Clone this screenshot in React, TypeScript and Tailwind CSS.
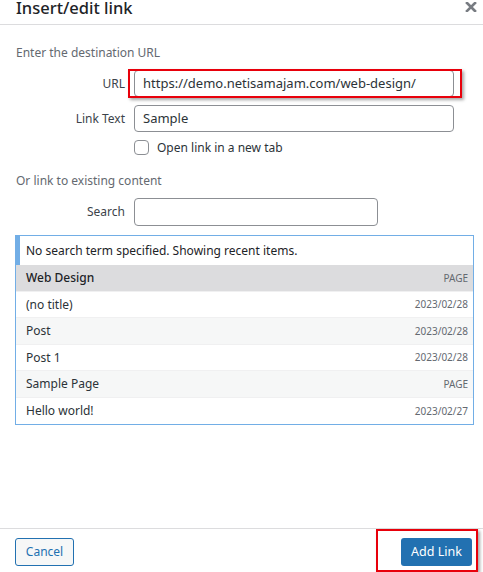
const results = [
  { title: "Web Design", info: "PAGE", selected: true },
  { title: "(no title)", info: "2023/02/28" },
  { title: "Post", info: "2023/02/28" },
  { title: "Post 1", info: "2023/02/28" },
  { title: "Sample Page", info: "PAGE" },
  { title: "Hello world!", info: "2023/02/27" },
];

const font = { fontFamily: '"Noto Sans", "Open Sans", sans-serif' };

export default function App() {
  return (
    <div
      className="h-[572px] w-[483px] flex flex-col bg-white text-[#1d2327] overflow-hidden"
      style={font}
    >
      {/* Header */}
      <div className="h-[25px] shrink-0 flex items-start justify-between border-b border-[#dcdcde] pl-4 pr-[6px]">
        <h1 className="text-[16.5px] leading-[18px] -mt-px font-medium text-[#1d2327]">
          Insert/edit link
        </h1>
        <button className="mt-[2px] text-[#787c82]" aria-label="Close">
          <svg width="12" height="10" viewBox="0 0 12 10">
            <path d="M2 1 L10 9 M10 1 L2 9" stroke="currentColor" strokeWidth="2.6" strokeLinecap="square" />
          </svg>
        </button>
      </div>

      {/* Body */}
      <div className="flex-1 flex flex-col pl-[15px] pr-[9px]">
        <p className="mt-[19px] pl-px h-[18px] text-[12px] leading-[18px] text-[#646970]">
          Enter the destination URL
        </p>

        <div className="mt-[8px] flex items-center gap-[9px]">
          <label className="w-[110px] text-right text-[12px] text-[#3c434a]">URL</label>
          <div className="relative">
            <div className="w-[320px] h-[27px] rounded-[4px] border border-[#8c8f94] px-2 flex items-center text-[13px] text-[#2c3338]">
              https://demo.netisamajam.com/web-design/
            </div>
            <div className="absolute -left-[6px] -right-[8px] -top-px -bottom-px border-2 border-[#e8000b] shadow-[2px_2px_3px_rgba(0,0,0,0.35)] pointer-events-none" />
          </div>
        </div>

        <div className="mt-[8px] flex items-center gap-[9px]">
          <label className="w-[110px] text-right text-[12px] text-[#3c434a]">Link Text</label>
          <div className="w-[320px] h-[27px] rounded-[4px] border border-[#8c8f94] px-2 flex items-center text-[13px] text-[#2c3338]">
            Sample
          </div>
        </div>

        <div className="mt-[8px] h-[15px] flex items-center gap-[8px] pl-[119px]">
          <span className="w-[15px] h-[15px] rounded-[4px] border border-[#8c8f94] bg-white" />
          <span className="text-[12px] leading-[15px] text-[#2c3338]">Open link in a new tab</span>
        </div>

        <p className="mt-[17px] pl-px h-[18px] text-[12px] leading-[18px] text-[#646970]">
          Or link to existing content
        </p>

        <div className="mt-[8px] flex items-center gap-[9px]">
          <label className="w-[110px] text-right text-[12px] text-[#3c434a]">Search</label>
          <div className="w-[244px] h-[28px] rounded-[4px] border border-[#8c8f94]" />
        </div>

        <div className="mt-[9px] border border-[#72aee6]">
          <div className="h-[29px] border-l-4 border-[#72aee6] pl-[6px] flex items-center text-[12px] text-[#1d2327]">
            No search term specified. Showing recent items.
          </div>
          {results.map((r, i) => (
            <div
              key={r.title}
              className={`flex items-center justify-between pl-[10px] pr-[5px] border-b border-[#f0f0f1] last:border-b-0 ${
                i % 2 === 0 ? "h-[27px]" : "h-[26px]"
              } ${r.selected ? "bg-[#dcdcde]" : i % 2 === 0 ? "bg-[#f6f7f7]" : "bg-white"}`}
            >
              <span className={`text-[12px] ${r.selected ? "text-[#1d2327] font-medium" : "text-[#2c3338]"}`}>
                {r.title}
              </span>
              <span className="text-[10px] text-[#646970]">{r.info}</span>
            </div>
          ))}
        </div>
      </div>

      {/* Footer */}
      <div className="shrink-0 border-t border-[#dcdcde] pt-[9px] pb-[6px] pl-[15px] pr-[11px] flex items-center justify-between">
        <button className="h-[28px] w-[59px] rounded-[3px] border border-[#2271b1] bg-[#f6f7f7] text-[12px] text-[#2271b1]">
          Cancel
        </button>
        <div className="relative">
          <button className="h-[28px] w-[71px] rounded-[3px] bg-[#2271b1] text-[12.5px] text-white">
            Add Link
          </button>
          <div className="absolute -left-[25px] -right-[6px] -top-[9px] -bottom-[6px] border-2 border-[#e8000b] shadow-[2px_2px_3px_rgba(0,0,0,0.35)] pointer-events-none" />
        </div>
      </div>
    </div>
  );
}
